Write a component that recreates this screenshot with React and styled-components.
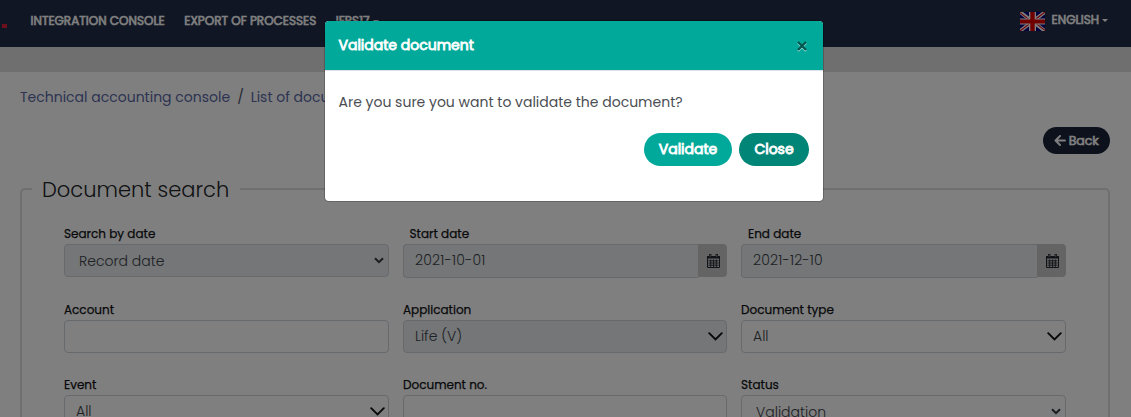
import React from 'react';
import styled, { createGlobalStyle } from 'styled-components';

const GlobalStyle = createGlobalStyle`
  * { box-sizing: border-box; }
  html, body { margin: 0; padding: 0; height: 417px; overflow: hidden; }
  body { background: #fff; font-family: Poppins, Inter, "Open Sans", sans-serif; color: #212529; font-size: 14px; }
`;

const Page = styled.div`
  position: relative;
  height: 417px;
  overflow: hidden;
`;

const Navbar = styled.nav`
  display: flex;
  align-items: center;
  height: 47px;
  padding: 0 22px 5px 2px;
  background: #222d48;
  white-space: nowrap;
`;

const LogoDot = styled.span`
  width: 5px;
  height: 4px;
  margin: 10px 23.5px 0 0;
  background: #d8203c;
`;

const NavItem = styled.a`
  display: flex;
  align-items: center;
  margin-right: ${(p) => p.$gap || 0}px;
  color: #fff;
  font-size: 12px;
  font-weight: 400;
  line-height: 18px;
  -webkit-text-stroke: 0.6px currentColor;
`;

const Caret = styled.span`
  margin-left: 3px;
  border-top: 3px solid #fff;
  border-left: 3.5px solid transparent;
  border-right: 3.5px solid transparent;
`;

const Language = styled.div`
  display: flex;
  align-items: center;
  gap: 7px;
  margin: -2px 1px 0 auto;
`;

const FlagIcon = styled.svg`
  display: block;
  margin-top: 3px;
`;

const Strip = styled.div`
  height: 25px;
  background: #dedede;
`;

const Breadcrumb = styled.div`
  display: flex;
  height: 20px;
  margin: 15px 0 0 20px;
  color: #5a67a4;
  font-size: 14px;
  font-weight: 400;
  line-height: 20px;
  white-space: nowrap;
`;

const Slash = styled.span`
  width: 20.5px;
  padding-left: 7px;
  color: #4c5570;
`;

const Toolbar = styled.div`
  display: flex;
  justify-content: flex-end;
  padding: 20px 21px 0 0;
`;

const BackButton = styled.button`
  display: flex;
  align-items: center;
  justify-content: center;
  gap: 2.5px;
  width: 67px;
  height: 27px;
  padding: 0;
  border: 0;
  border-radius: 14px;
  background: #182238;
  color: #fff;
  font: 400 12.5px Poppins, Inter, sans-serif;
  -webkit-text-stroke: 0.65px currentColor;

  svg { -webkit-text-stroke: 0; }
`;

const SearchPanel = styled.fieldset`
  height: 300px;
  margin: 20px 21px 0 20px;
  padding: 0 42px;
  border: 2px solid #dedede;
  border-radius: 5px;
  min-width: 0;
`;

const Legend = styled.legend`
  width: 208px;
  height: 30px;
  margin-left: -32px;
  padding: 0 0 0 10px;
  font-size: 21px;
  font-weight: 300;
  line-height: 31px;
  white-space: nowrap;
`;

const Grid = styled.div`
  display: grid;
  grid-template-columns: 325px 324px 325px;
  column-gap: 14px;
  grid-auto-rows: 75.5px;
  padding-top: 22px;
`;

const Field = styled.div`
  min-width: 0;
`;

const Label = styled.label`
  display: block;
  height: 18px;
  padding-left: ${(p) => p.$indent || 0}px;
  color: #111316;
  font-size: 12px;
  font-weight: 400;
  line-height: 16px;
  -webkit-text-stroke: 0.25px currentColor;
`;

const Control = styled.div`
  display: flex;
  align-items: center;
  justify-content: space-between;
  height: 33px;
  padding: 0 ${(p) => (p.$native ? 4 : 3)}px 0 ${(p) => (p.$native ? 14 : 11)}px;
  border: 1px solid #ced4da;
  border-radius: 4px;
  background: ${(p) => (p.$muted ? '#e9ecef' : '#fff')};
  color: #3c4248;
  font-size: 14px;
  font-weight: 300;

  span { padding-top: ${(p) => (p.$native ? 1 : 0)}px; }
`;

const DateGroup = styled.div`
  display: flex;
`;

const DateInput = styled.div`
  flex: 1;
  height: 34px;
  padding-left: 11px;
  border: 1px solid #ced4da;
  border-right: 0;
  border-radius: 4px 0 0 4px;
  background: #e9ecef;
  color: #3c4248;
  font-size: 14px;
  font-weight: 300;
  line-height: 31px;
  letter-spacing: 0.18px;
`;

const DateAddon = styled.div`
  display: flex;
  align-items: center;
  justify-content: center;
  width: 29px;
  height: 33px;
  padding: 1px 0 0 2px;
  border-radius: 0 4px 4px 0;
  background: #c8c8c8;
`;

const Backdrop = styled.div`
  position: absolute;
  inset: 0;
  display: flex;
  justify-content: center;
  align-items: flex-start;
  padding: 20px 0 0 17px;
  background: rgba(0, 0, 0, 0.5);
`;

const Dialog = styled.section`
  width: 500px;
  height: 182px;
  border: 1px solid rgba(0, 0, 0, 0.2);
  border-radius: 5px;
  background: #fff;
  background-clip: padding-box;
  overflow: hidden;
`;

const DialogHeader = styled.header`
  display: flex;
  align-items: center;
  justify-content: space-between;
  height: 50px;
  padding: 0 16px 0 13.5px;
  border-bottom: 1px solid #dee2e6;
  background: #00a99a;
`;

const DialogTitle = styled.h5`
  margin: 0;
  color: #fff;
  font-size: 14px;
  font-weight: 400;
  -webkit-text-stroke: 0.8px currentColor;
`;

const CloseIcon = styled.svg`
  display: block;
  filter: drop-shadow(0 1px 0 rgba(255, 255, 255, 0.6));
`;

const Question = styled.p`
  margin: 21px 13.5px 0;
  color: #4a4e53;
  font-size: 14px;
  font-weight: 400;
  line-height: 21px;
  white-space: nowrap;
`;

const Actions = styled.div`
  display: flex;
  justify-content: flex-end;
  gap: 7px;
  padding: 20px 14px 0;
`;

const ActionButton = styled.button`
  width: ${(p) => p.$width}px;
  height: 33px;
  padding: 0 0 1px;
  border: 0;
  border-radius: 17px;
  background: ${(p) => (p.$dark ? '#008577' : '#00a99a')};
  color: #fff;
  font: 400 14px Poppins, Inter, sans-serif;
  -webkit-text-stroke: 0.85px currentColor;
`;

function UnionFlag() {
  return (
    <FlagIcon width="25" height="19" viewBox="0 0 25 19">
      <rect width="25" height="19" fill="#000080" />
      <path d="M0 0 25 19M25 0 0 19" stroke="#fff" strokeWidth="3.6" />
      <path d="M0 .6 12.5 10.1M25 0 12.5 9.5M0 19 12.5 9.5M25 18.4 12.5 8.9" stroke="#e00000" strokeWidth="1.1" />
      <path d="M12.5 0V19" stroke="#fff" strokeWidth="7" />
      <path d="M0 9.5H25" stroke="#fff" strokeWidth="6" />
      <path d="M12.5 0V19" stroke="#e00000" strokeWidth="4.4" />
      <path d="M0 9.5H25" stroke="#e00000" strokeWidth="4" />
    </FlagIcon>
  );
}

function Chevron({ small }) {
  return small ? (
    <svg width="10" height="7" viewBox="0 0 10 7" fill="none">
      <path d="M1 1.2 5 5.2 9 1.2" stroke="#343a40" strokeWidth="2" />
    </svg>
  ) : (
    <svg width="15" height="9" viewBox="0 0 15 9" fill="none">
      <path d="M1.2 1.2 7.5 7.5 13.8 1.2" stroke="#111" strokeWidth="1.9" strokeLinecap="round" />
    </svg>
  );
}

function Calendar() {
  return (
    <svg width="13" height="14" viewBox="0 0 13 14">
      <path d="M.5 2.5h12v11H.5z" fill="none" stroke="#202630" />
      <path d="M0 2h13v2.6H0zM2 0h2.4v3H2zM8.6 0H11v3H8.6z" fill="#202630" />
      <path d="M3.2 .7v2M9.8 .7v2" stroke="#c8c8c8" strokeWidth=".8" />
      <path d="M1.5 6.8h10M1.5 9h10M1.5 11.2h10M3.7 5.5v7.5M6.5 5.5v7.5M9.3 5.5v7.5" stroke="#202630" strokeWidth=".9" />
    </svg>
  );
}

function SelectField({ label, value, native, muted }) {
  return (
    <Field>
      <Label>{label}</Label>
      <Control $native={native} $muted={muted}>
        <span>{value}</span>
        <Chevron small={native} />
      </Control>
    </Field>
  );
}

function TextField({ label }) {
  return (
    <Field>
      <Label>{label}</Label>
      <Control />
    </Field>
  );
}

function DateField({ label, value, indent }) {
  return (
    <Field>
      <Label $indent={indent}>{label}</Label>
      <DateGroup>
        <DateInput>{value}</DateInput>
        <DateAddon><Calendar /></DateAddon>
      </DateGroup>
    </Field>
  );
}

export default function App() {
  return (
    <Page>
      <GlobalStyle />
      <Navbar>
        <LogoDot />
        <NavItem $gap={19.5}>INTEGRATION CONSOLE</NavItem>
        <NavItem $gap={19.5}>EXPORT OF PROCESSES</NavItem>
        <NavItem>IFRS17<Caret /></NavItem>
        <Language>
          <UnionFlag />
          <NavItem>ENGLISH<Caret /></NavItem>
        </Language>
      </Navbar>
      <Strip />
      <Breadcrumb>
        <span>Technical accounting console</span>
        <Slash>/</Slash>
        <span>List of documents</span>
      </Breadcrumb>
      <Toolbar>
        <BackButton>
          <svg width="12" height="11" viewBox="0 0 12 11" fill="none">
            <path d="M6 1 1.5 5.5 6 10M1.8 5.5H11" stroke="#fff" strokeWidth="1.9" strokeLinecap="round" strokeLinejoin="round" />
          </svg>
          Back
        </BackButton>
      </Toolbar>
      <SearchPanel>
        <Legend>Document search</Legend>
        <Grid>
          <SelectField label="Search by date" value="Record date" native muted />
          <DateField label="Start date" value="2021-10-01" indent={6.5} />
          <DateField label="End date" value="2021-12-10" indent={7} />
          <TextField label="Account" />
          <SelectField label="Application" value="Life (V)" muted />
          <SelectField label="Document type" value="All" />
          <SelectField label="Event" value="All" />
          <TextField label="Document no." />
          <SelectField label="Status" value="Validation" native />
        </Grid>
      </SearchPanel>
      <Backdrop>
        <Dialog>
          <DialogHeader>
            <DialogTitle>Validate document</DialogTitle>
            <CloseIcon width="10" height="10" viewBox="0 0 10 10">
              <path d="M1 1 9 9M9 1 1 9" stroke="#00544d" strokeWidth="2.2" />
            </CloseIcon>
          </DialogHeader>
          <Question>Are you sure you want to validate the document?</Question>
          <Actions>
            <ActionButton $width={88}>Validate</ActionButton>
            <ActionButton $width={70} $dark>Close</ActionButton>
          </Actions>
        </Dialog>
      </Backdrop>
    </Page>
  );
}
